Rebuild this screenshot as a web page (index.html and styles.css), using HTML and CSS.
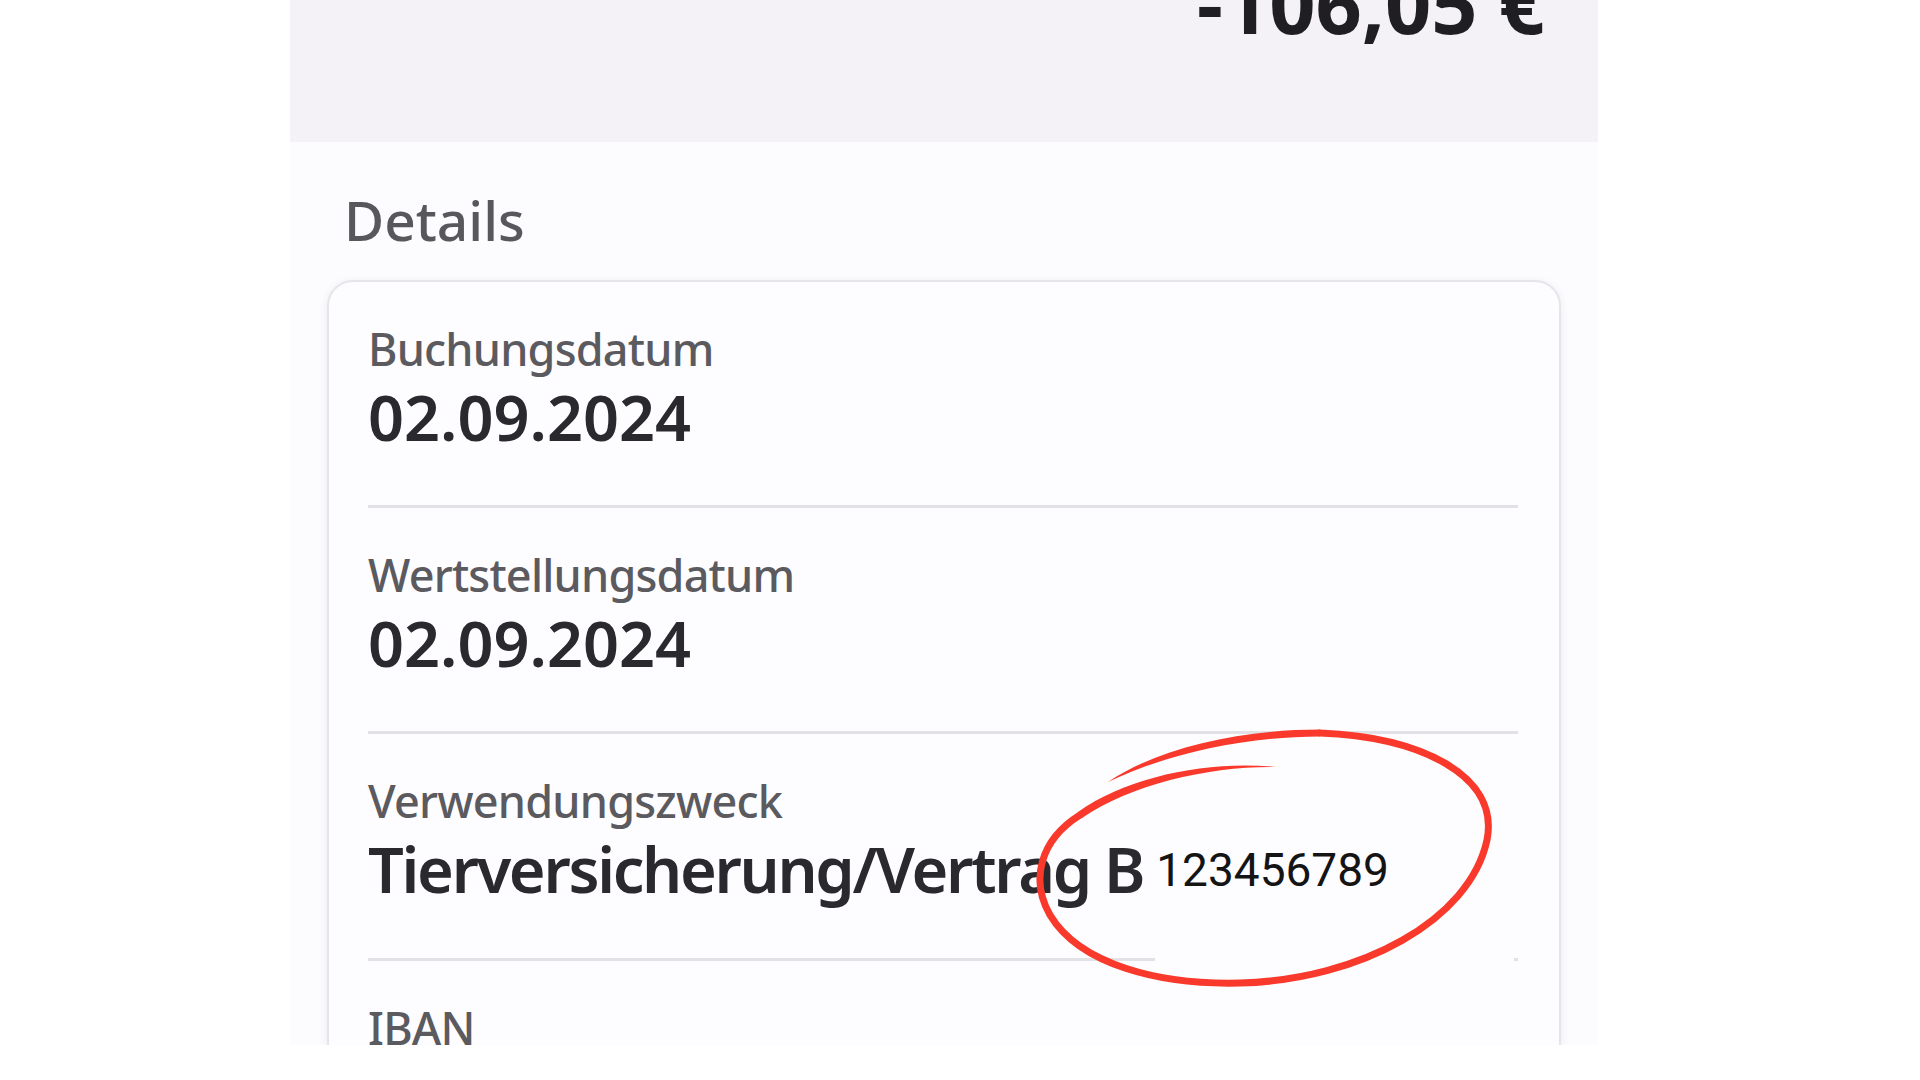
FILE: index.html
```html
<!DOCTYPE html>
<html lang="de">
<head>
    <meta charset="UTF-8">
    <meta name="viewport" content="width=device-width, initial-scale=1.0">
    <title>Umsatzdetails</title>
    <link rel="stylesheet" href="styles.css">
</head>
<body>

<div class="screen">
    <div class="summary">
        <div class="amount">-106,05 €</div>
    </div>

    <section class="details">
        <h2 class="details-title">Details</h2>

        <div class="card">
            <div class="row">
                <div class="row-label">Buchungsdatum</div>
                <div class="row-value">02.09.2024</div>
                <div class="rule"></div>
            </div>
            <div class="row">
                <div class="row-label">Wertstellungsdatum</div>
                <div class="row-value">02.09.2024</div>
                <div class="rule"></div>
            </div>
            <div class="row">
                <div class="row-label">Verwendungszweck</div>
                <div class="row-value row-value-text">Tierversicherung/Vertrag B <span class="ref-no">123456789</span></div>
                <div class="rule rule-cut"><span class="cut-seg"></span><span class="cut-end"></span></div>
            </div>
            <div class="row">
                <div class="row-label">IBAN</div>
                <div class="row-value">&nbsp;</div>
            </div>
        </div>
    </section>

    <!-- roter Markierungskreis um die Vertragsnummer, Enden laufen spitz aus -->
    <svg class="mark" viewBox="1000 700 520 320" width="520" height="320">
        <path class="mark-line" d="M 1080 815 C 1040 840, 1030 880, 1050 915 C 1080 965, 1160 985, 1240 983 C 1360 980, 1470 920, 1487 840 C 1500 775, 1420 737, 1320 733"/>
        <!-- Anfang des Strichs -->
        <path class="mark-tip" d="M 1276 767 C 1210 760, 1128 776, 1078 812 L 1082 818 C 1132 784, 1210 766, 1276 767 Z"/>
        <!-- Ende des Strichs -->
        <path class="mark-tip" d="M 1320 729.5 C 1240 729.5, 1158 748, 1108 782 C 1162 756, 1240 736.5, 1320 736.5 Z"/>
    </svg>
</div>

</body>
</html>
```

FILE: styles.css
```css
body {
    margin: 0;
    background-color: #ffffff;
    font-family: "Noto Sans", "Open Sans", sans-serif;
    color: #2a292e;
}
.screen {
    position: relative;
    width: 1308px;
    height: 1045px;
    margin-left: 290px;
    background-color: #fcfbfd;
    overflow: hidden;
}
.summary {
    height: 142px;
    padding-right: 53px;
    background-color: #f4f2f6;
    text-align: right;
    overflow: hidden;
}
.amount {
    margin-top: -37px;
    font-size: 81px;
    line-height: 80px;
    font-weight: 700;
    color: #1f1e22;
}
.details {
    padding-top: 45px;
}
.details-title {
    margin: 0;
    padding-left: 54px;
    font-size: 55px;
    line-height: 66px;
    font-weight: 500;
    color: #58575c;
}
.card {
    margin: 27px 37px 0;
    background-color: #fdfcfe;
    border: 2px solid #e6e5e9;
    border-radius: 26px;
    box-shadow: 0 2px 10px rgba(0, 0, 0, 0.07);
}
.row {
    margin: 0 41px 0 39px;
    padding-top: 39px;
}
.row-label {
    font-size: 45px;
    line-height: 56px;
    font-weight: 500;
    letter-spacing: -0.8px;
    color: #5b5a5f;
}
.row-value {
    margin-top: 2px;
    font-size: 63px;
    line-height: 76px;
    font-weight: 600;
    color: #2a292e;
    white-space: nowrap;
}
.row-value-text {
    letter-spacing: -2.3px;
}
.ref-no {
    margin-left: -1px;
    font-family: Roboto, "Liberation Sans", sans-serif;
    font-size: 46px;
    font-weight: 400;
    letter-spacing: normal;
    color: #141414;
    vertical-align: 7px;
}
.rule {
    height: 3px;
    margin-top: 50px;
    background-color: #e2e1e5;
}
.rule-cut {
    display: flex;
    background-color: transparent;
}
.cut-seg {
    width: 787px;
    background-color: #e2e1e5;
}
.cut-end {
    width: 4px;
    margin-left: auto;
    background-color: #e2e1e5;
}
.mark {
    position: absolute;
    left: 710px;
    top: 700px;
    overflow: visible;
}
.mark-line {
    fill: none;
    stroke: #f8392b;
    stroke-width: 7;
    stroke-linecap: round;
    stroke-linejoin: round;
}
.mark-tip {
    fill: #f8392b;
    stroke: none;
}
```
